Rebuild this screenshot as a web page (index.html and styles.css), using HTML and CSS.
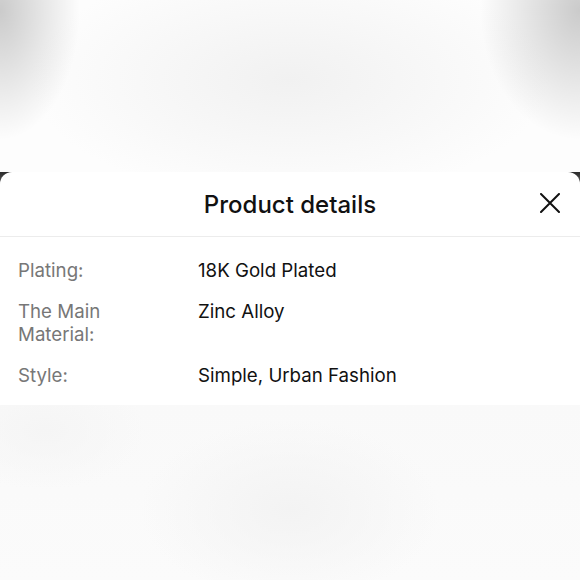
FILE: index.html
```html
<!DOCTYPE html>
<html lang="en">
<head>
<meta charset="utf-8">
<title>Product details</title>
<link rel="stylesheet" href="styles.css">
</head>
<body>
<div class="page">
  <div class="backdrop-top"></div>
  <div class="sheet-wrap">
    <section class="sheet">
      <header class="sheet-header">
        <h1 class="sheet-title">Product details</h1>
        <button class="close" aria-label="Close">
          <svg width="20" height="20" viewBox="0 0 20 20" aria-hidden="true">
            <path d="M1 1 L19 19 M19 1 L1 19" stroke="#111" stroke-width="2" stroke-linecap="round" fill="none"/>
          </svg>
        </button>
      </header>
      <dl class="specs">
        <div class="spec">
          <dt class="label">Plating:</dt>
          <dd class="value">18K Gold Plated</dd>
        </div>
        <div class="spec">
          <dt class="label">The Main Material:</dt>
          <dd class="value">Zinc Alloy</dd>
        </div>
        <div class="spec">
          <dt class="label">Style:</dt>
          <dd class="value">Simple, Urban Fashion</dd>
        </div>
      </dl>
    </section>
  </div>
  <div class="backdrop-bottom"></div>
</div>
</body>
</html>
```
FILE: styles.css
```css
html, body {
  margin: 0;
  padding: 0;
}
body {
  font-family: Inter, "Liberation Sans", Arial, sans-serif;
  color: #111;
  background: #fbfbfb;
}
.page {
  width: 580px;
  height: 580px;
  display: flex;
  flex-direction: column;
  overflow: hidden;
}
.backdrop-top {
  height: 172px;
  flex: none;
  background:
    radial-gradient(ellipse 80px 130px at 0 10px, rgba(0,0,0,0.2), rgba(0,0,0,0) 100%),
    radial-gradient(ellipse 100px 130px at 580px 10px, rgba(0,0,0,0.2), rgba(0,0,0,0) 100%),
    radial-gradient(ellipse 260px 120px at 290px 80px, #f1f1f1, #fdfdfd 100%);
}
.sheet-wrap {
  flex: none;
  background: linear-gradient(#2b2b2b 0, #555 10px, #bbb 18px, #fff 20px);
}
.sheet {
  background: #fff;
  border-radius: 12px 12px 0 0;
}
.sheet-header {
  height: 65px;
  display: flex;
  align-items: center;
  justify-content: center;
  position: relative;
  border-bottom: 1.5px solid #ececec;
  box-sizing: border-box;
}
.sheet-title {
  margin: 0;
  font-size: 24px;
  font-weight: 500;
  color: #111;
  letter-spacing: 0;
}
.close {
  position: absolute;
  right: 20px;
  top: 21px;
  width: 20px;
  height: 20px;
  padding: 0;
  border: 0;
  background: none;
  display: flex;
}
.specs {
  margin: 0;
  padding: 22px 18px 18px;
  display: flex;
  flex-direction: column;
  gap: 18px;
}
.spec {
  display: flex;
  font-size: 18.7px;
  line-height: 23px;
}
.label {
  width: 120px;
  margin: 0 60px 0 0;
  color: #777;
}
.value {
  margin: 0;
  color: #111;
}
.backdrop-bottom {
  flex: 1;
  background:
    radial-gradient(ellipse 150px 90px at 290px 105px, #f3f3f3, rgba(250,250,250,0) 100%),
    radial-gradient(ellipse 100px 60px at 45px 25px, #f5f5f5, rgba(250,250,250,0) 100%),
    linear-gradient(#f9f9f9, #fbfbfb);
}
```
